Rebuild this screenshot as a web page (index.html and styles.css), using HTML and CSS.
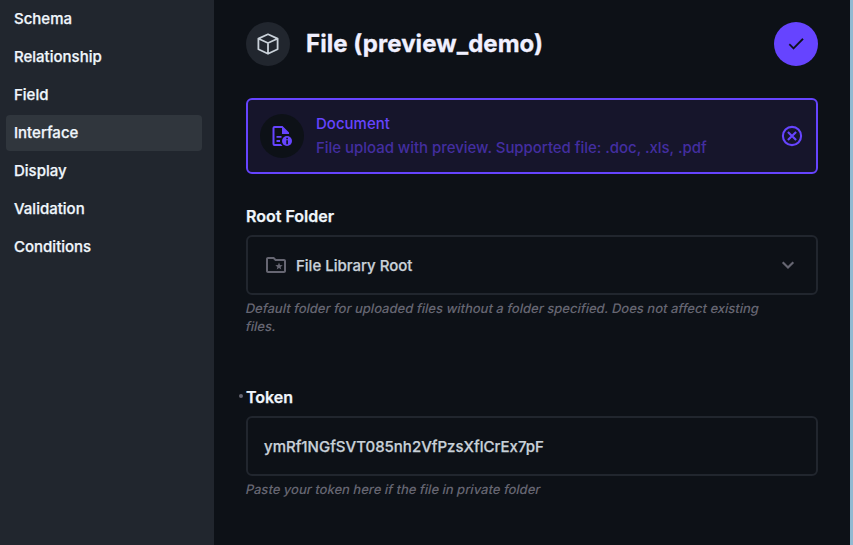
FILE: index.html
```html
<!DOCTYPE html>
<html lang="en">
<head>
<meta charset="utf-8">
<title>File (preview_demo)</title>
<link rel="stylesheet" href="styles.css">
</head>
<body>
<nav class="sidebar">
  <a class="tab">Schema</a>
  <a class="tab">Relationship</a>
  <a class="tab">Field</a>
  <a class="tab active">Interface</a>
  <a class="tab">Display</a>
  <a class="tab">Validation</a>
  <a class="tab">Conditions</a>
</nav>
<main class="content">
  <header class="header">
    <span class="round neutral"><svg class="icon" viewBox="0 0 24 24"><path d="M12 2.3 21.6 6.6v10.7L12 21.8 2.4 17.3V6.6z M2.6 6.8 12 11l9.4-4.2M12 11v10.5" fill="none" stroke="currentColor" stroke-width="1.8" stroke-linejoin="round"/></svg></span>
    <h1 class="title">File (preview_demo)</h1>
    <button class="round save" aria-label="Save"><svg class="icon" viewBox="0 0 24 24"><path d="M9 16.17 4.83 12l-1.42 1.41L9 19 21 7l-1.41-1.41z" transform="translate(0 -.4)"/></svg></button>
  </header>
  <section class="selected">
    <span class="round dark"><svg class="icon" viewBox="0 0 24 24"><path d="M12.5 2H4.500a2 2 0 0 0-2 2v16a2 2 0 0 0 2 2h8a7 7 0 0 1-1.600-2H4.500V4H12v6h7V8.500z"/><path d="M6.500 12h5v1.800h-5zM6.500 16H10v1.900H6.500z"/><circle cx="17" cy="17" r="5"/><path class="info" d="M16.300 13.800h1.600v1.400h-1.600zM16.300 16.200h1.600v4h-1.600z"/></svg></span>
    <div class="summary">
      <div class="name">Document</div>
      <div class="description">File upload with preview. Supported file: .doc, .xls, .pdf</div>
    </div>
    <svg class="icon clear" viewBox="0 0 24 24"><circle cx="12" cy="12" r="9.100"/><path d="m7.900 7.900 8.200 8.200m0-8.200-8.200 8.200"/></svg>
  </section>
  <section class="field">
    <h2 class="label">Root Folder</h2>
    <div class="input">
      <svg class="icon folder" viewBox="0 0 24 24"><path d="M20 6h-8l-2-2H4c-1.100 0-2 .9-2 2v12c0 1.100.9 2 2 2h16c1.100 0 2-.9 2-2V8c0-1.100-.9-2-2-2zm0 12H4V6h5.170l2 2H20z"/><path d="m15 9.500 1 2.500 2.700.2-2.100 1.700.7 2.600-2.300-1.400-2.300 1.400.7-2.600-2.100-1.700L14 12z"/></svg>
      <span class="value">File Library Root</span>
      <svg class="icon chevron" viewBox="0 0 24 24"><path d="m6.700 9.300 5.300 5.200 5.300-5.200"/></svg>
    </div>
    <p class="note"><span class="slant">Default folder for uploaded files without a folder specified. Does not affect existing</span> <span class="slant">files.</span></p>
  </section>
  <section class="field token">
    <h2 class="label"><span class="edited"></span>Token</h2>
    <div class="input text-input"><span class="value">ymRf1NGfSVT085nh2VfPzsXflCrEx7pF</span></div>
    <p class="note"><span class="slant">Paste your token here if the file in private folder</span></p>
  </section>
</main>
</body>
</html>
```
FILE: styles.css
```css
* { box-sizing: border-box; }
body {
  margin: 0;
  height: 545px;
  display: flex;
  overflow: hidden;
  background: #0d1117;
  color: #f0f6fc;
  font: 500 15px/22px Inter, sans-serif;
}
.sidebar {
  width: 214px;
  padding: 1px 12px 0 6px;
  background: #21262e;
  flex: none;
}
.tab {
  display: block;
  height: 36px;
  margin-bottom: 2px;
  padding: 0 8px;
  border-radius: 4px;
  line-height: 35px;
  -webkit-text-stroke: .25px currentColor;
}
.active { background: #30363d; }
.content {
  flex: 1;
  padding: 22px 32px 0;
  border-right: 3px solid #91b9d1;
}
.header { display: flex; align-items: center; height: 44px; }
.round {
  display: flex;
  align-items: center;
  justify-content: center;
  width: 44px;
  height: 44px;
  padding: 0;
  border: 0;
  border-radius: 50%;
  flex: none;
}
.neutral { background: #21262e; color: #c9d1d9; }
.save { background: #6644ff; color: #0d1117; margin-left: auto; }
.save .icon { width: 20px; height: 20px; stroke: currentColor; stroke-width: .3; }
.dark { background: #0d1117; }
.icon { display: block; width: 24px; height: 24px; fill: currentColor; flex: none; }
.title {
  margin: 0 0 0 16px;
  color: #f0f0ff;
  font-size: 24px;
  line-height: 32px;
  font-weight: 700;
  letter-spacing: .05px;
  -webkit-text-stroke: .3px currentColor;
}
.selected {
  display: flex;
  align-items: center;
  height: 76px;
  margin-top: 32px;
  padding: 0 12px;
  border: 2px solid #6644ff;
  border-radius: 6px;
  background: #16152b;
  color: #6644ff;
}
.summary { margin-left: 12px; line-height: 24px; }
.description { color: #432ea0; letter-spacing: -.035px; }
.clear { margin-left: auto; fill: none; stroke: currentColor; stroke-width: 2.1; }
.info { fill: #0d1117; }
.field { margin-top: 30px; }
.label {
  position: relative;
  margin: 0 0 7px;
  font-size: 16px;
  line-height: 24px;
  font-weight: 600;
  -webkit-text-stroke: .25px currentColor;
}
.input {
  display: flex;
  align-items: center;
  height: 60px;
  padding: 0 16px;
  border: 2px solid #21262e;
  border-radius: 6px;
  color: #c9d1d9;
}
.value { padding-top: 1px; -webkit-text-stroke: .25px currentColor; }
.folder { color: #666672; }
.folder + .value { margin-left: 8px; }
.chevron { margin-left: auto; fill: none; stroke: #666672; stroke-width: 2.2; }
.note {
  max-width: 540px;
  margin: 4px 0 0;
  color: #666672;
  font-size: 13px;
  line-height: 18px;
}
.slant { display: inline-block; transform: skewX(-12deg); vertical-align: top; letter-spacing: .01px; }
.token { margin-top: 50px; }
.edited {
  position: absolute;
  left: -7px;
  top: 9px;
  width: 4px;
  height: 4px;
  border-radius: 50%;
  background: #666672;
}
```
